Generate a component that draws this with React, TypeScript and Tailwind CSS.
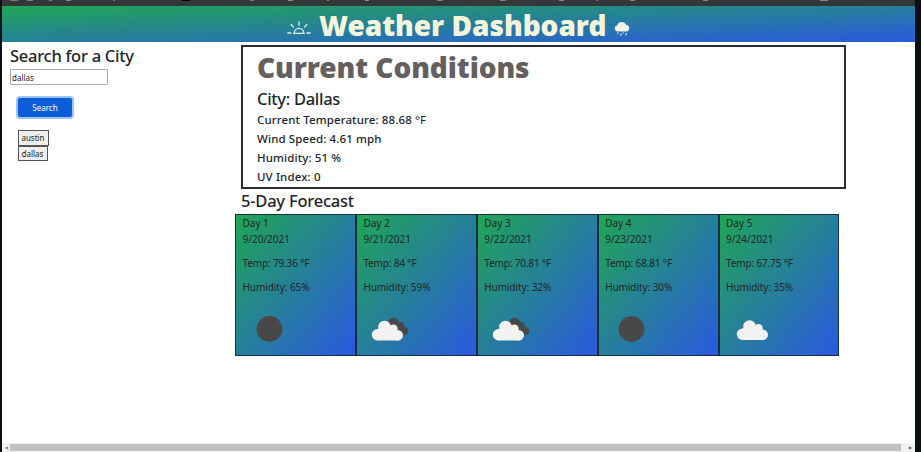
import React from "react";

const cardGradient = "bg-[linear-gradient(to_bottom_right,#20a654,#2b59e0)]";

type Sky = "clear" | "broken" | "cloudy";

const days: { name: string; date: string; temp: string; humidity: string; sky: Sky }[] = [
  { name: "Day 1", date: "9/20/2021", temp: "79.36", humidity: "65", sky: "clear" },
  { name: "Day 2", date: "9/21/2021", temp: "84", humidity: "59", sky: "broken" },
  { name: "Day 3", date: "9/22/2021", temp: "70.81", humidity: "32", sky: "broken" },
  { name: "Day 4", date: "9/23/2021", temp: "68.81", humidity: "30", sky: "clear" },
  { name: "Day 5", date: "9/24/2021", temp: "67.75", humidity: "35", sky: "cloudy" },
];

const tabMarks = [
  "ml-[8px] w-[8px] bg-[#777]",
  "ml-[9px] w-[6px] bg-[#8d8464]",
  "ml-[16px] w-[3px] bg-[#777]",
  "ml-[14px] w-[5px] bg-[#888]",
  "ml-[42px] w-[2px] bg-[#777]",
  "ml-[67px] w-[8px] bg-black",
  "ml-[60px] w-[4px] bg-[#777]",
  "ml-[34px] w-[5px] bg-[#888]",
  "ml-[34px] w-[2px] bg-[#886]",
  "ml-[36px] w-[4px] bg-[#a88]",
  "ml-[68px] w-[6px] bg-[#8d8464]",
  "ml-[57px] w-[6px] bg-[#8d8464]",
  "ml-[53px] w-[5px] bg-[#888]",
  "ml-[32px] w-[2px] bg-[#777]",
  "ml-[32px] w-[5px] bg-[#888]",
  "ml-[68px] w-[5px] bg-[#888]",
  "ml-[112px] w-[8px] bg-[#8d8464]",
];

function SkyIcon({ sky }: { sky: Sky }) {
  return (
    <svg className="block h-[32px] w-[50px]" viewBox="0 0 50 32">
      {sky === "clear" && <circle cx="18.500" cy="16" r="12.900" fill="#484848" />}
      {sky === "broken" && (
        <g fill="#484848">
          <circle cx="22.500" cy="10.500" r="5.800" />
          <circle cx="29" cy="13.300" r="4.300" />
          <circle cx="33.500" cy="18" r="3.800" />
          <path d="M19 11h12l4 10.800h-8Z" />
        </g>
      )}
      {sky !== "clear" && (
        <g transform={sky === "cloudy" ? "translate(1.500 -.5)" : "translate(-.5 0)"} fill="#f2f2f2">
          <circle cx="7" cy="21.800" r="5.700" />
          <circle cx="14" cy="14" r="6.300" />
          <circle cx="23" cy="15.800" r="4.200" />
          <circle cx="27.200" cy="22.200" r="5.300" />
          <path d="M7 16l5-2 11-1 4 5 1 9.500H7Z" />
        </g>
      )}
    </svg>
  );
}

function Sunrise() {
  return (
    <svg className="mt-[14.500px] h-[14px] w-[24px]" viewBox="0 0 24 14" fill="none" stroke="#dff0dc" strokeWidth="1.300" strokeLinecap="round">
      <path d="M.8 12h3.200M6.500 12.300h11M20 12h3.200M7.300 12a4.700 4.700 0 0 1 9.400 0M12 .8v3.500M4.200 3.500l2.300 2.600M19.800 3.500l-2.300 2.600" />
    </svg>
  );
}

function Rain() {
  return (
    <svg className="mt-[14.500px] h-[16px] w-[16px]" viewBox="0 0 16 16" fill="#f2f3e2">
      <path d="M3.500 10.500a3.200 3.200 0 0 1-.2-6.300A4.800 4.800 0 0 1 12.200 4 3.300 3.300 0 0 1 12.700 10.500Z" />
      <path d="m4.200 11.300-.6 1.700M7.300 12.500l-.7 2.300M9.300 11.300l-.5 1.200M12.500 12l-.8 2.300" stroke="#f2f3e2" strokeWidth="1" />
    </svg>
  );
}

export default function App() {
  return (
    <div className="flex h-[452px] w-[921px] flex-col overflow-hidden bg-[#0b0f18] pr-[6px] pl-[2px] font-['Noto_Sans',sans-serif] text-[#212529]">
      <div className="flex h-[6px] shrink-0 items-start bg-[#343639]">
        {tabMarks.map((mark) => (
          <span key={mark} className={`h-px shrink-0 ${mark}`} />
        ))}
      </div>
      <header className={`flex h-[35.500px] shrink-0 pl-[285px] ${cardGradient}`}>
        <Sunrise />
        <h1 className="ml-[8px] w-[295px] text-[28px] leading-[38px] font-black tracking-[-0.020px] whitespace-nowrap text-[#f5f5dc]">
          Weather Dashboard
        </h1>
        <Rain />
      </header>
      <div className="flex h-[401.500px] shrink-0 bg-white">
        <aside className="w-[233px] pl-[8px]">
          <h2 className="mt-[3.500px] text-[16.500px] leading-[22px] font-medium tracking-[-0.270px]">Search for a City</h2>
          <div className="mt-[2px] h-[16px] w-[98px] rounded-[1px] border border-[#aaa] pl-px text-[8px] leading-[15px]">dallas</div>
          <button className="mt-[13px] ml-[8px] block h-[19px] w-[54px] rounded-[2px] bg-[#0b5ed7] text-[8px] leading-[18px] text-white ring-2 ring-[#9dc3fb]">
            Search
          </button>
          <div className="mt-[12.500px] ml-[7.500px] flex flex-col items-start text-[8px] leading-[13px]">
            <button className="h-[16px] w-[31px] border border-[#555] bg-[#efefef]">austin</button>
            <button className="h-[15px] w-[30px] border border-[#555] bg-[#efefef]">dallas</button>
          </div>
        </aside>
        <main className="w-[680px]">
          <section className="mt-[3.500px] ml-[6px] h-[144px] w-[605px] border-[2.500px] border-[#292c30] pl-[14px]">
            <h2 className="mt-px text-[28px] leading-[38px] font-black tracking-[-0.070px] text-[#655f5f]">Current Conditions</h2>
            <h3 className="mt-[2px] text-[16.500px] leading-[22px] font-medium tracking-[-0.3px]">City: Dallas</h3>
            <div className="text-[11.500px] leading-[19px] font-medium tracking-[0.120px]">
              <p>Current Temperature: 88.68 <span className="font-normal">°F</span></p>
              <p>Wind Speed: 4.61 mph</p>
              <p>Humidity: 51 %</p>
              <p>UV Index: 0</p>
            </div>
          </section>
          <h2 className="ml-[6px] h-[25px] text-[16.500px] leading-[23px] font-medium tracking-[-0.220px]">5-Day Forecast</h2>
          <div className="flex h-[142px] w-[605px]">
            {days.map((day) => (
              <article key={day.name} className={`w-[120.900px] border border-[#1b2d3b] pl-[6.500px] text-[10px] leading-[16px] ${cardGradient}`}>
                <p>{day.name}</p>
                <p>{day.date}</p>
                <p className="mt-[8px] tracking-[-0.150px]">Temp: {day.temp} °F</p>
                <p className="mt-[8px] tracking-[-0.080px]">Humidity: {day.humidity}%</p>
                <div className="mt-[18px] ml-[8px]">
                  <SkyIcon sky={day.sky} />
                </div>
              </article>
            ))}
          </div>
        </main>
      </div>
      <div className="flex h-[9px] shrink-0 items-center bg-[#f1f1f1]">
        <span className="w-[8px] pl-[3px] text-[4px] leading-none text-[#777]">◀</span>
        <div className="h-[7px] w-[891px] bg-[#c1c1c1]" />
        <span className="pl-[8px] text-[4px] leading-none text-[#555]">▶</span>
      </div>
    </div>
  );
}
